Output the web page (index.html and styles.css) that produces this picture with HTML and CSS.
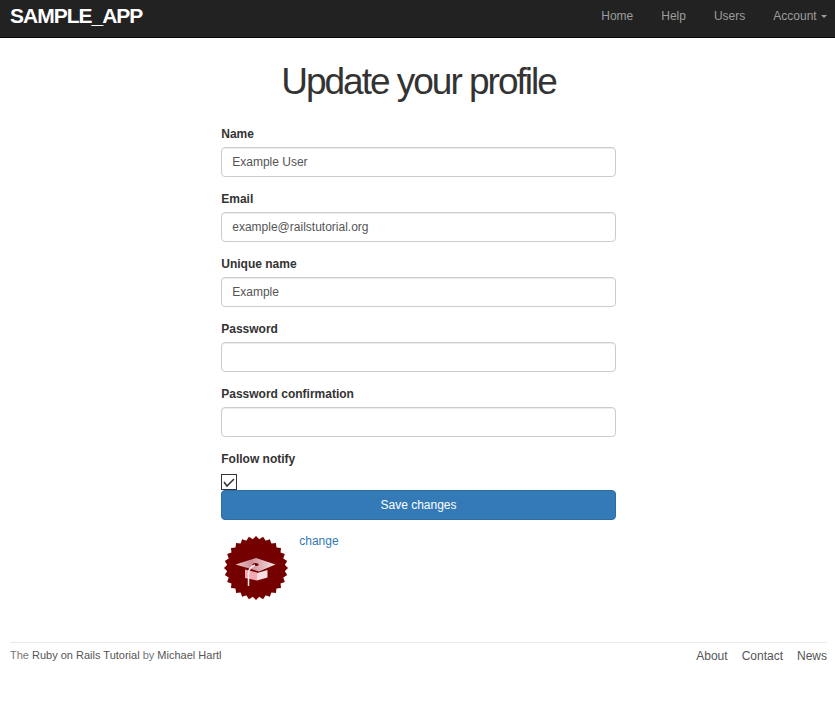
FILE: index.html
```html
<!DOCTYPE html>
<html lang="en">
<head>
    <meta charset="UTF-8">
    <meta name="viewport" content="width=device-width, initial-scale=1.0">
    <title>Edit user | Sample App</title>
    <link rel="stylesheet" href="styles.css">
</head>
<body>
    <header class="navbar">
        <a class="logo" href="#">SAMPLE_APP</a>
        <nav class="nav">
            <a href="#">Home</a>
            <a href="#">Help</a>
            <a href="#">Users</a>
            <a href="#">Account <span class="caret"></span></a>
        </nav>
    </header>
    <div class="container">
        <h1>Update your profile</h1>
        <main class="edit-user">
            <form>
                <label for="user-name">Name</label>
                <input class="form-control" type="text" id="user-name" value="Example User">

                <label for="user-email">Email</label>
                <input class="form-control" type="email" id="user-email" value="example@railstutorial.org">

                <label for="user-unique-name">Unique name</label>
                <input class="form-control" type="text" id="user-unique-name" value="Example">

                <label for="user-password">Password</label>
                <input class="form-control" type="password" id="user-password">

                <label for="user-confirmation">Password confirmation</label>
                <input class="form-control" type="password" id="user-confirmation">

                <label for="user-notify">Follow notify</label>
                <input class="checkbox" type="checkbox" id="user-notify" checked>

                <button class="btn" type="submit">Save changes</button>
            </form>
            <div class="gravatar-edit">
                <svg class="gravatar" viewBox="0 0 70 70" role="img" aria-label="Example User">
                    <defs>
                        <linearGradient id="board" x1="0" y1="0" x2="1" y2="0">
                            <stop offset="0" stop-color="#e8c4c8"/>
                            <stop offset="0.4" stop-color="#cf9299"/>
                            <stop offset="1" stop-color="#f4e4e6"/>
                        </linearGradient>
                    </defs>
                    <!-- seal: seven turned squares give 28 teeth -->
                    <g fill="#750000">
                        <path id="square" d="M35 3L67 35L35 67L3 35Z"/>
                        <use href="#square" transform="rotate(12.857 35 35)"/>
                        <use href="#square" transform="rotate(25.714 35 35)"/>
                        <use href="#square" transform="rotate(38.571 35 35)"/>
                        <use href="#square" transform="rotate(51.429 35 35)"/>
                        <use href="#square" transform="rotate(64.286 35 35)"/>
                        <use href="#square" transform="rotate(77.143 35 35)"/>
                    </g>
                    <!-- graduation cap -->
                    <path d="M24 36.500L36 39.500V47.500L24 45Z" fill="#f2a9b3"/>
                    <path d="M36 40L46.500 37V44.500L36 47.500Z" fill="#f7dde0"/>
                    <path d="M14.500 31.500L35 25L54.500 31.500L38 38.500Z" fill="url(#board)"/>
                    <ellipse cx="34.500" cy="31.500" rx="3" ry="1.500" fill="#750000"/>
                    <path d="M34 32Q27.500 35 27.500 40V53" fill="none" stroke="#fbecee" stroke-width="1.500"/>
                </svg>
                <a href="#">change</a>
            </div>
        </main>
        <footer class="footer">
            <small>The <a href="#">Ruby on Rails Tutorial</a> by <a href="#">Michael Hartl</a></small>
            <nav class="footer-nav">
                <a href="#">About</a>
                <a href="#">Contact</a>
                <a href="#">News</a>
            </nav>
        </footer>
    </div>
</body>
</html>
```
FILE: styles.css
```css
* {
    box-sizing: border-box;
}

body {
    margin: 0;
    font-family: "Liberation Sans", Arial, sans-serif;
    font-size: 12px;
    line-height: 17px;
    color: #333;
    background: #fff;
}

a {
    color: #337ab7;
    text-decoration: none;
}

/* header */

.navbar {
    display: flex;
    justify-content: space-between;
    height: 38px;
    padding: 0 8px 0 10px;
    background: #222;
    border-bottom: 1px solid #080808;
}

.logo {
    font-size: 21px;
    font-weight: bold;
    line-height: 32px;
    letter-spacing: -1px;
    color: #fff;
}

.nav {
    display: flex;
    gap: 28px;
    line-height: 32px;
}

.nav a {
    color: #9d9d9d;
}

.caret {
    display: inline-block;
    margin-left: 1px;
    vertical-align: middle;
    border-top: 3px solid;
    border-left: 3px solid transparent;
    border-right: 3px solid transparent;
}

/* form */

.container {
    padding: 0 8px 0 10px;
}

h1 {
    margin: 24px 0;
    font-size: 37px;
    font-weight: normal;
    line-height: 40px;
    letter-spacing: -2px;
    text-align: center;
}

.edit-user {
    width: 50%;
    margin: 0 auto;
    padding: 0 7px;
}

label {
    display: block;
    margin-bottom: 4px;
    font-weight: bold;
}

.form-control {
    display: block;
    width: 100%;
    height: 30px;
    margin: 0 0 14px;
    padding: 0 10px;
    font: inherit;
    color: #555;
    border: 1px solid #ccc;
    border-radius: 4px;
    box-shadow: inset 0 1px 1px rgba(0, 0, 0, 0.075);
}

.checkbox {
    display: block;
    appearance: none;
    width: 16px;
    height: 16px;
    margin: 6px 0 0;
    border: 1px solid #333;
}

.checkbox:checked {
    background: url('data:image/svg+xml,<svg xmlns="http://www.w3.org/2000/svg" viewBox="0 0 14 14"><path d="M2 7l3 4 7-7" fill="none" stroke="%23333" stroke-width="1.5"/></svg>');
}

.btn {
    display: block;
    width: 100%;
    height: 30px;
    padding: 0;
    font: inherit;
    color: #fff;
    background: #337ab7;
    border: 1px solid #2e6da4;
    border-radius: 4px;
    cursor: pointer;
}

.gravatar-edit {
    display: flex;
    gap: 8px;
    margin-top: 13px;
}

.gravatar {
    width: 70px;
    height: 70px;
}

/* footer */

.footer {
    display: flex;
    justify-content: space-between;
    margin-top: 39px;
    padding-top: 5px;
    color: #777;
    border-top: 1px solid #eaeaea;
}

.footer small {
    font-size: 11px;
    line-height: 15px;
}

.footer a {
    color: #555;
}

.footer-nav {
    display: flex;
    gap: 14px;
}
```
